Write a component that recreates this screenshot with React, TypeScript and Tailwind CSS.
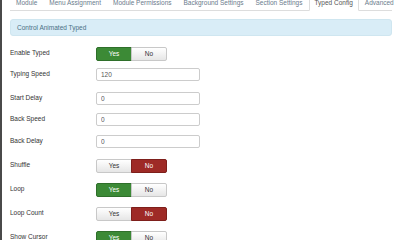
import { useState } from "react";

type Field =
  | { label: string; kind: "toggle"; value: boolean; top: string }
  | { label: string; kind: "text"; value: string; top: string };

const tabs = [
  "Module",
  "Menu Assignment",
  "Module Permissions",
  "Background Settings",
  "Section Settings",
  "Typed Config",
  "Advanced",
];

const fields: Field[] = [
  { label: "Enable Typed", kind: "toggle", value: true, top: "mt-[11px]" },
  { label: "Typing Speed", kind: "text", value: "120", top: "mt-[7px]" },
  { label: "Start Delay", kind: "text", value: "0", top: "mt-[11px]" },
  { label: "Back Speed", kind: "text", value: "0", top: "mt-[8px]" },
  { label: "Back Delay", kind: "text", value: "0", top: "mt-[9px]" },
  { label: "Shuffle", kind: "toggle", value: false, top: "mt-[11px]" },
  { label: "Loop", kind: "toggle", value: true, top: "mt-[10px]" },
  { label: "Loop Count", kind: "toggle", value: false, top: "mt-[10px]" },
  { label: "Show Cursor", kind: "toggle", value: true, top: "mt-[10px]" },
];

function YesNo({ initial }: { initial: boolean }) {
  const [on, setOn] = useState(initial);
  const off =
    "border-[#c8c8c8] bg-gradient-to-b from-white to-[#e6e6e6] text-[#333]";
  return (
    <div className="flex h-[14px] w-[71px] text-[6.5px]">
      <button
        onClick={() => setOn(true)}
        className={`flex w-[36px] items-center justify-center rounded-l-[2px] border ${
          on ? "border-[#2f6f2a] bg-[#3c8a36] text-white" : off
        }`}
      >
        Yes
      </button>
      <button
        onClick={() => setOn(false)}
        className={`-ml-px flex w-[36px] items-center justify-center rounded-r-[2px] border ${
          on ? off : "border-[#7e1f1b] bg-[#9e2a26] text-white"
        }`}
      >
        No
      </button>
    </div>
  );
}

export default function App() {
  return (
    <div className="flex h-[240px] w-[400px] overflow-hidden bg-white font-['Liberation_Sans',Arial,sans-serif] text-[#333]">
      <div className="w-[2px] shrink-0 bg-[#4a4a4a]" />
      <div className="flex min-w-0 flex-1 flex-col px-[8px]">
        {/* Tabs */}
        <div className="-mt-[6px] flex h-[17px] shrink-0 items-stretch border-b border-[#ddd] text-[6.5px]">
          {tabs.map((t) => {
            const active = t === "Typed Config";
            return (
              <div
                key={t}
                className={`-mb-px flex items-center rounded-t-[3px] border px-[5px] whitespace-nowrap ${
                  active
                    ? "border-[#ddd] border-b-white bg-white text-[#555]"
                    : "border-transparent text-[#6a7b8c]"
                }`}
              >
                {t}
              </div>
            );
          })}
        </div>

        {/* Info bar */}
        <div className="mt-[8px] flex h-[17px] shrink-0 items-center rounded-[3px] border border-[#cfe6f0] bg-[#d9edf7] px-[6px] text-[6.5px] text-[#4a6f84]">
          Control Animated Typed
        </div>

        {/* Form */}
        <div className="flex flex-col">
          {fields.map((f) => (
            <div key={f.label} className={`flex items-start ${f.top}`}>
              <div className="w-[86px] shrink-0 pt-[1px] text-[6.5px] leading-[10px]">
                {f.label}
              </div>
              {f.kind === "toggle" ? (
                <YesNo initial={f.value} />
              ) : (
                <input
                  defaultValue={f.value}
                  className="h-[13px] w-[104px] rounded-[2px] border border-[#ccc] bg-white px-[4px] text-[6.5px] text-[#555] outline-none"
                />
              )}
            </div>
          ))}
        </div>
      </div>
    </div>
  );
}
